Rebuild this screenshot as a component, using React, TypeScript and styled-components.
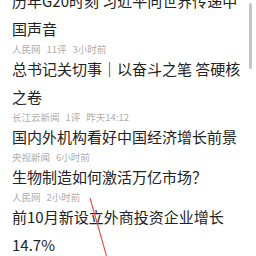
import React from "react";
import styled, { createGlobalStyle } from "styled-components";

const Global = createGlobalStyle`
  html, body { margin: 0; padding: 0; background: #fff; }
  body { width: 256px; height: 256px; overflow: hidden; }
  #root { position: relative; width: 256px; height: 256px; overflow: hidden; }
`;

const Feed = styled.div`
  display: flex;
  flex-direction: column;
  margin-top: -13px;
  padding: 0 12px;
  font-family: "Noto Sans CJK SC", "Noto Sans", sans-serif;
`;

const Item = styled.div`
  display: flex;
  flex-direction: column;
`;

const Title = styled.div`
  font-size: 15px;
  line-height: 28px;
  color: #222;
`;

const Meta = styled.div`
  display: flex;
  font-size: 9.5px;
  line-height: 12px;
  color: #adadad;
`;

const MetaPart = styled.span`
  margin-right: 6px;
`;

const Scrollbar = styled.div`
  position: absolute;
  right: 4px;
  top: 3px;
  width: 3px;
  height: 66px;
  border-radius: 2px;
  background: #c4c4c4;
`;

const Mark = styled.svg`
  position: absolute;
  left: 0;
  top: 0;
  pointer-events: none;
`;

const items = [
  { title: "历年G20时刻 习近平向世界传递中国声音", meta: ["人民网", "11评", "3小时前"] },
  { title: "总书记关切事｜以奋斗之笔 答硬核之卷", meta: ["长江云新闻", "1评", "昨天14:12"] },
  { title: "国内外机构看好中国经济增长前景", meta: ["央视新闻", "6小时前"] },
  { title: "生物制造如何激活万亿市场？", meta: ["人民网", "2小时前"] },
  { title: "前10月新设立外商投资企业增长14.7%", meta: [] as string[] },
];

export default function App() {
  return (
    <>
      <Global />
      <Feed>
        {items.map((it, i) => (
          <Item key={i}>
            <Title>{it.title}</Title>
            {it.meta.length > 0 && (
              <Meta>
                {it.meta.map((m, j) => (
                  <MetaPart key={j}>{m}</MetaPart>
                ))}
              </Meta>
            )}
          </Item>
        ))}
      </Feed>
      <Scrollbar />
      <Mark width="256" height="256" viewBox="0 0 256 256">
        <line x1="90" y1="198" x2="106.5" y2="256" stroke="#f04848" strokeWidth="1.1" />
      </Mark>
    </>
  );
}
